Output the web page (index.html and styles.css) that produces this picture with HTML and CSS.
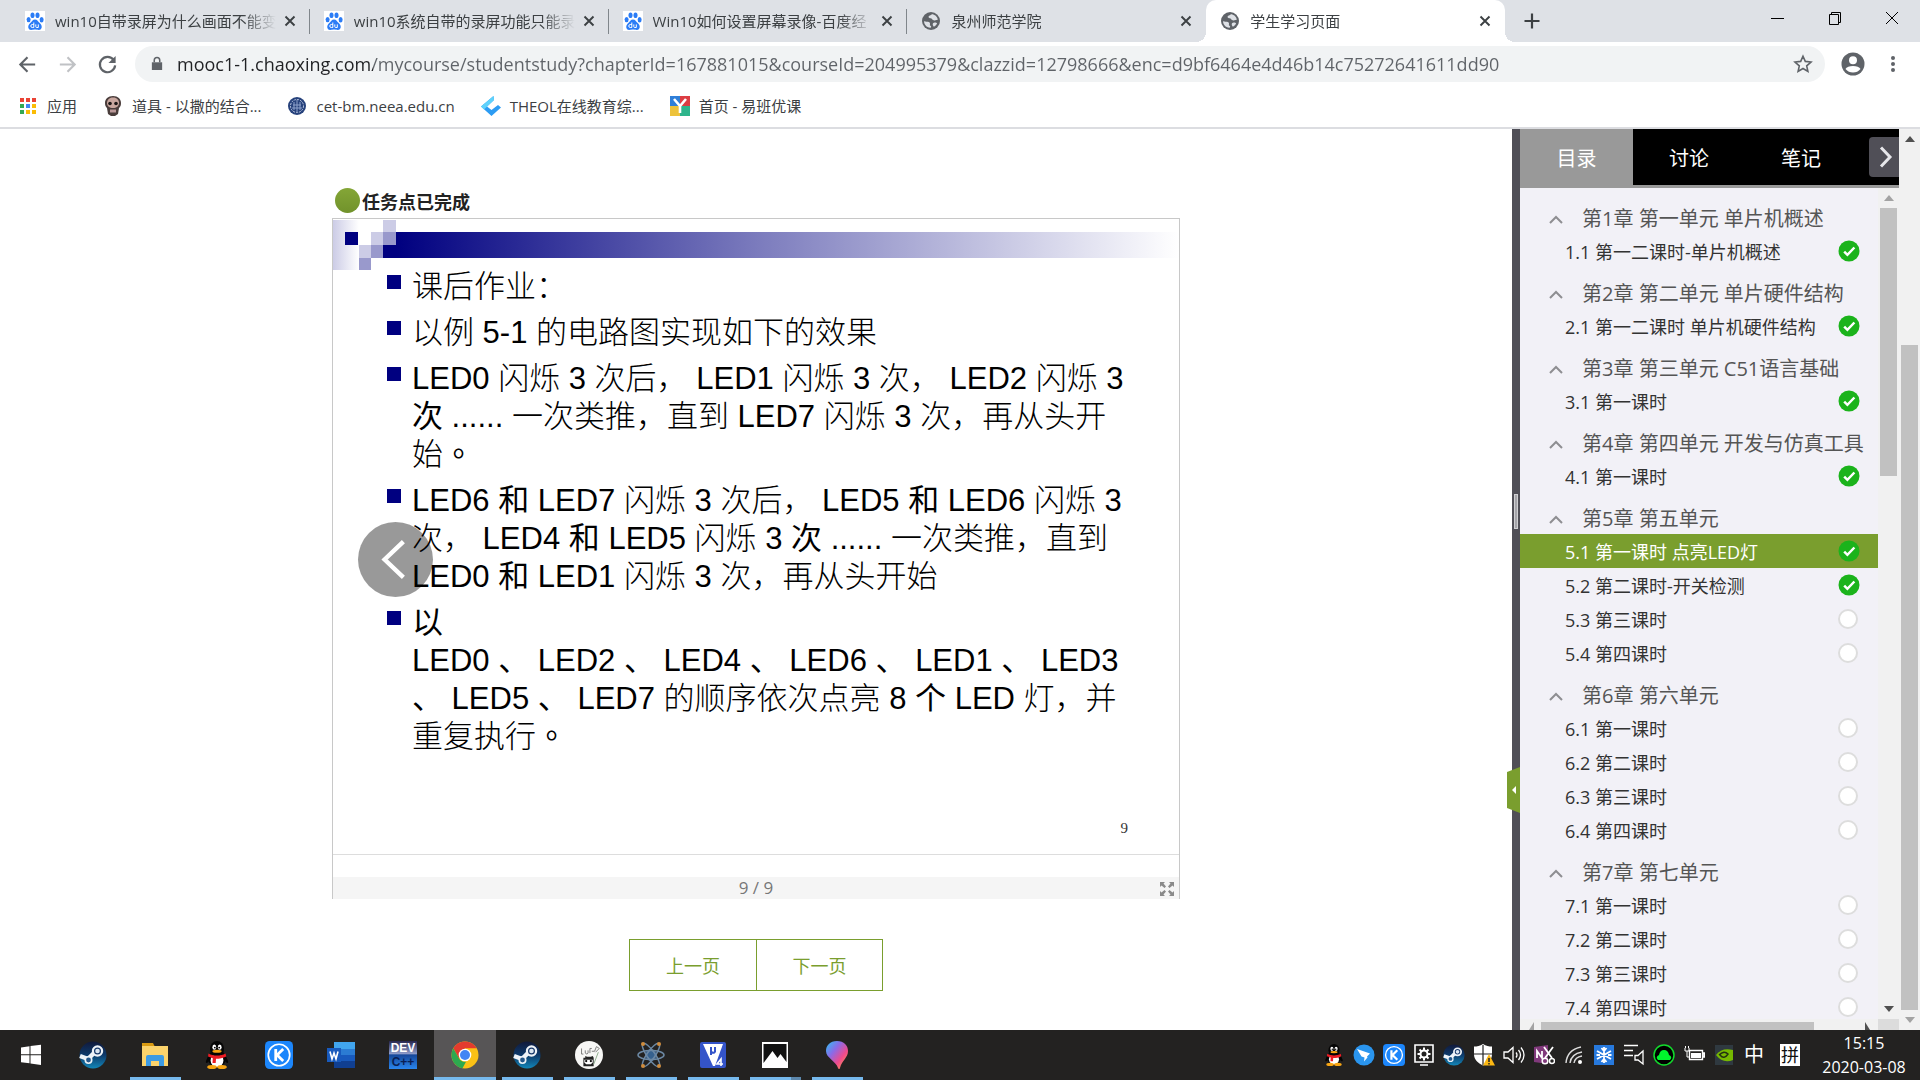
FILE: index.html
```html
<!DOCTYPE html>
<html lang="zh-CN">
<head>
<meta charset="utf-8">
<title>学生学习页面</title>
<link rel="stylesheet" href="styles.css">
</head>
<body>
<svg class="defs" aria-hidden="true">
  <defs>
    <linearGradient id="steamFill" x1="0" y1="0" x2="0" y2="1"><stop offset="0" stop-color="#11193a"/><stop offset=".5" stop-color="#0d3a6b"/><stop offset="1" stop-color="#1387b8"/></linearGradient>
    <linearGradient id="dropFill" x1="0" y1="0" x2="1" y2="1"><stop offset="0" stop-color="#29c5f5"/><stop offset=".35" stop-color="#8a6be8"/><stop offset=".65" stop-color="#ef4a8c"/><stop offset="1" stop-color="#ffb03a"/></linearGradient>
    <symbol id="paw" viewBox="0 0 20 20"><path fill="#fff" d="M0 0h20v20H0z"/><g fill="#2b7cf6"><ellipse cx="3.6" cy="8.6" rx="2" ry="2.7"/><ellipse cx="7.5" cy="4.2" rx="2" ry="2.8"/><ellipse cx="12.5" cy="4.2" rx="2" ry="2.8"/><ellipse cx="16.6" cy="8.8" rx="2" ry="2.7"/><path d="M10 8.4c2.4 0 3 2.2 5 3.9 2.600 2.200 2.400 6.600-1.200 6.700-1.500 0-2.300-.4-3.800-.4s-2.300.4-3.800.4c-3.600-.1-3.800-4.500-1.200-6.700 2-1.700 2.600-3.900 5-3.900z"/></g><path d="M8.800 11.500v5H7.300a1.500 1.500 0 0 1 0-3h1.500M10.800 13.400v2.300q0 .8.900.8h1.600v-3.100" fill="none" stroke="#fff"/></symbol>
    <symbol id="globe" viewBox="0 0 20 20"><circle cx="10" cy="10" r="9" fill="#5f6368"/><path fill="#dee1e6" d="M3 10c2 1.300 4.800.1 5.800 1.700.8 1.300-.8 2.300.9 3.300 1 .6.300 1.800-.4 1.700C5.500 16.500 3 13.500 3 10zM10.700 3.300c-.5 1.500-3.200.9-3.100 2.800.1 1.700 2.500.8 3.300 1.900.7 1 2.300 1.900 3.500 1.200l2.400-.5c-.4-2.900-3-5.400-6.100-5.400zM12 12.200c1-1.200 3.400-.6 4.100-.1-.4 1.600-1.700 3-3.200 3.700-.7-.8-1.700-2.400-.9-3.600z"/></symbol>
    <symbol id="x" viewBox="0 0 20 20"><path d="M5.500 5.500l9 9M14.500 5.500l-9 9" stroke="#3c4043" stroke-width="1.900"/></symbol>
    <symbol id="up" viewBox="0 0 14 10"><path d="M1 8l6-6 6 6" fill="none" stroke="#8e8e92" stroke-width="2"/></symbol>
    <symbol id="ok" viewBox="0 0 22 22"><circle cx="11" cy="11" r="10.500" fill="#1bb31b"/><path d="M6.200 11.600l3.200 3.200 7-7.300" fill="none" stroke="#fff" stroke-width="2.500"/></symbol>
    <symbol id="steam" viewBox="0 0 28 28"><circle cx="14" cy="14" r="13.500" fill="url(#steamFill)"/><path d="M1 15l8 3 6-6" stroke="#eef3f8" stroke-width="4.500" fill="none"/><circle cx="9.500" cy="19" r="4" fill="#eef3f8"/><circle cx="9.500" cy="19" r="2.400" fill="#24588b"/><circle cx="18.500" cy="10" r="4.600" fill="#17386a" stroke="#eef3f8" stroke-width="2.200"/><circle cx="18.500" cy="10" r="2.300" fill="#dce7f2"/></symbol>
    <symbol id="qq" viewBox="0 0 28 28"><ellipse cx="14" cy="17.500" rx="9" ry="8.500" fill="#050505"/><path d="M5.500 14l-2.500 6c-.5 2 .5 2.600 2 1.300l3-4zM22.500 14l2.500 6c.5 2-.5 2.600-2 1.300l-3-4z" fill="#050505"/><ellipse cx="14" cy="19.500" rx="6.400" ry="6.600" fill="#fff"/><ellipse cx="14" cy="8" rx="7" ry="8" fill="#050505"/><ellipse cx="11.300" cy="6.200" rx="1.900" ry="2.600" fill="#fff"/><ellipse cx="16.700" cy="6.200" rx="1.900" ry="2.600" fill="#fff"/><circle cx="11.800" cy="6.600" r=".9"/><circle cx="16.200" cy="6.600" r=".9"/><ellipse cx="14" cy="10.300" rx="4.600" ry="1.500" fill="#f8a512"/><path d="M5.500 12.500c5 2.800 12 2.800 17 0l.8 3c-3.500 1.800-6.800 2.300-10.300 2.300l-.3 4.200H9.500l.3-4.800-4.800-1.700z" fill="#ed1c24"/><ellipse cx="9" cy="26" rx="4.800" ry="2" fill="#f8a512"/><ellipse cx="19" cy="26" rx="4.800" ry="2" fill="#f8a512"/></symbol>
    <symbol id="kapp" viewBox="0 0 30 30"><rect width="30" height="30" rx="5" fill="#1c86fb"/><circle cx="15" cy="15" r="11.500" fill="none" stroke="#fff" stroke-width="1.800"/><path d="M11.500 8.500v13M19.500 8.500L13 15l6.500 6.500" fill="none" stroke="#fff" stroke-width="3"/></symbol>
  </defs>
</svg>

<header class="browser">
  <div class="tabstrip">
    <nav class="tabs" aria-label="标签页">
      <div class="tab"><svg class="favicon"><use href="#paw"/></svg><button class="tab-title">win10自带录屏为什么画面不能变</button><button class="tab-close" aria-label="关闭"><svg><use href="#x"/></svg></button></div>
      <div class="tab"><svg class="favicon"><use href="#paw"/></svg><button class="tab-title">win10系统自带的录屏功能只能录</button><button class="tab-close" aria-label="关闭"><svg><use href="#x"/></svg></button></div>
      <div class="tab"><svg class="favicon"><use href="#paw"/></svg><button class="tab-title">Win10如何设置屏幕录像-百度经</button><button class="tab-close" aria-label="关闭"><svg><use href="#x"/></svg></button></div>
      <div class="tab last"><svg class="favicon"><use href="#globe"/></svg><button class="tab-title">泉州师范学院</button><button class="tab-close" aria-label="关闭"><svg><use href="#x"/></svg></button></div>
      <div class="tab active"><svg class="favicon"><use href="#globe"/></svg><button class="tab-title">学生学习页面</button><button class="tab-close" aria-label="关闭"><svg><use href="#x"/></svg></button></div>
    </nav>
    <button class="new-tab" aria-label="新标签页"><svg viewBox="0 0 20 20"><path d="M10 2.500v15M2.500 10h15" stroke="#3c4043" stroke-width="2.200"/></svg></button>
    <div class="window-controls">
      <button aria-label="最小化"><svg viewBox="0 0 16 16"><path d="M1 8.500h13" stroke="#000"/></svg></button>
      <button aria-label="还原"><svg viewBox="0 0 16 16"><path d="M2.500 4.500h9v10h-9zM4.500 4.500v-2h9v10h-2" fill="none" stroke="#000"/></svg></button>
      <button aria-label="关闭窗口"><svg viewBox="0 0 16 16"><path d="M2 2l12 12M14 2L2 14" stroke="#000"/></svg></button>
    </div>
  </div>
  <div class="toolbar">
    <button class="nav-btn" aria-label="后退"><svg viewBox="0 0 24 24"><path d="M20 12H5M12 4.500L4.500 12l7.500 7.500" fill="none" stroke="#5f6368" stroke-width="2.200"/></svg></button>
    <button class="nav-btn" aria-label="前进"><svg viewBox="0 0 24 24"><path d="M4 12h15M12 4.500l7.500 7.500-7.500 7.500" fill="none" stroke="#c0c2c5" stroke-width="2.200"/></svg></button>
    <button class="nav-btn" aria-label="刷新"><svg viewBox="0 0 24 24"><path d="M18.500 7.300A8 8 0 1 0 20 13" fill="none" stroke="#5f6368" stroke-width="2.300"/><path d="M20.500 3v7.500H13z" fill="#5f6368"/></svg></button>
    <div class="omnibox">
      <svg class="lock" viewBox="0 0 14 18"><path d="M1 7h12v9H1z" fill="#5f6368"/><path d="M3.800 7V4.500a3.200 3.200 0 0 1 6.400 0V7" fill="none" stroke="#5f6368" stroke-width="1.800"/></svg>
      <input class="url" type="text" aria-label="地址" value="mooc1-1.chaoxing.com/mycourse/studentstudy?chapterId=167881015&amp;courseId=204995379&amp;clazzid=12798666&amp;enc=d9bf6464e4d46b14c75272641611dd90">
      <button class="star" aria-label="添加书签"><svg viewBox="0 0 20 20"><path d="M10 2.200l2.300 5.200 5.700.6-4.300 3.800 1.200 5.600-4.900-2.900-4.900 2.900 1.200-5.600L2 8l5.700-.6z" fill="none" stroke="#5f6368" stroke-width="1.600"/></svg></button>
    </div>
    <button class="profile" aria-label="账户"><svg viewBox="0 0 24 24"><circle cx="12" cy="12" r="11.500" fill="#5f6368"/><circle cx="12" cy="8.300" r="4" fill="#fff"/><path d="M4.500 17c1.600-4 13.400-4 15 0-3.700 4.700-11.300 4.700-15 0z" fill="#fff"/></svg></button>
    <button class="menu" aria-label="菜单"><svg viewBox="0 0 6 18"><g fill="#5f6368"><circle cx="3" cy="3" r="2"/><circle cx="3" cy="9" r="2"/><circle cx="3" cy="15" r="2"/></g></svg></button>
  </div>
  <nav class="bookmarks" aria-label="书签">
    <a href="#"><svg viewBox="0 0 20 20"><path fill="#ea4335" d="M2 2h4v4H2zM8 2h4v4H8zM14 2h4v4h-4z"/><path fill="#34a853" d="M2 8h4v4H2z"/><path fill="#4285f4" d="M8 8h4v4H8z"/><path fill="#fbbc05" d="M14 8h4v4h-4zM8 14h4v4H8zM14 14h4v4h-4z"/><path fill="#34a853" d="M2 14h4v4H2z"/></svg><span>应用</span></a>
    <a href="#"><svg viewBox="0 0 20 20"><path d="M10 0c5 0 8 3 8 7 0 3-1 4-2 5l-1 6-3 2H8l-3-2-1-6C3 11 2 10 2 7c0-4 3-7 8-7z" fill="#4a3d3b"/><path d="M10 1.500c4 0 6 2.500 6 5.500s-2.500 5-6 5-6-2-6-5 2-5.500 6-5.500z" fill="#c9a79f"/><circle cx="7" cy="7.500" r="1.800" fill="#1d1716"/><circle cx="13" cy="7.500" r="1.800" fill="#1d1716"/><path d="M7 15h6" stroke="#b99" stroke-width="3"/></svg><span>道具 - 以撒的结合...</span></a>
    <a href="#"><svg viewBox="0 0 20 20"><circle cx="10" cy="10" r="9" fill="#27427c"/><circle cx="10" cy="10" r="6.500" fill="none" stroke="#b8c4df" stroke-dasharray="2 1"/><path d="M5 12h10M6 9h8M10 4v12M7 6v8M13 6v8" stroke="#8fa2cc"/></svg><span>cet-bm.neea.edu.cn</span></a>
    <a href="#"><svg viewBox="0 0 20 20"><path d="M12.500 0L0 10.500 10.500 20 20 11.500l-3-2.500-6.500 5L6 10.500 13 4z" fill="#2c9cf3"/><path d="M12.500 0L0 10.500l3 3L13 4z" fill="#5fd2fb"/></svg><span>THEOL在线教育综...</span></a>
    <a href="#"><svg viewBox="0 0 20 20"><path fill="#2f7fd8" d="M0 0h10v10H0z"/><path fill="#dc3d43" d="M10 0h10v10H10z"/><path fill="#edc23a" d="M0 10h10v10H0z"/><path fill="#2eb58c" d="M10 10h10v10H10z"/><path d="M4 3l6 7 6-7M10 9v8" fill="none" stroke="#fff" stroke-width="2.600"/></svg><span>首页 - 易班优课</span></a>
  </nav>
</header>

<div class="page">
  <main class="content">
    <p class="task-done"><span class="dot"></span>任务点已完成</p>
    <section class="viewer">
      <div class="slide">
        <div class="banner">
          <svg class="mosaic" viewBox="0 0 64 51"><defs><linearGradient id="fade"><stop offset="0" stop-color="#cccce6"/><stop offset="1" stop-color="#fff"/></linearGradient></defs><path d="M0 0h26v50H0z" fill="url(#fade)"/><path d="M12 12h13v13H12z" fill="#000080"/><path d="M50 12h14v26H50z" fill="#000080"/><path d="M50 0h13v12H50zM38 12h12v13H38zM26 25h12v13H26z" fill="#cccce6"/><path d="M50 12h13v13H50zM38 25h12v13H38zM26 38h12v12H26z" fill="#99c"/></svg>
          <div class="bar"></div>
        </div>
        <ul class="points">
          <li>课后作业：</li>
          <li>以例 5-1 的电路图实现如下的效果</li>
          <li>LED0 闪烁 3 次后， LED1 闪烁 3 次， LED2 闪烁 3<br><b>次</b> ...... 一次类推，直到 LED7 闪烁 3 次，再从头开<br>始<b class="stop" lang="zh-TW">。</b></li>
          <li>LED6 <b>和</b> LED7 闪烁 3 次后， LED5 <b>和</b> LED6 闪烁 3<br>次， LED4 <b>和</b> LED5 闪烁 3 <b>次</b> ...... 一次类推，直到<br>LED0 <b>和</b> LED1 闪烁 3 次，再从头开始</li>
          <li><b>以</b><br>LED0 <b>、</b> LED2 <b>、</b> LED4 <b>、</b> LED6 <b>、</b> LED1 <b>、</b> LED3<br><b>、</b> LED5 <b>、</b> LED7 的顺序依次点亮 8 <b>个</b> LED 灯，并<br>重复执行<b class="stop" lang="zh-TW">。</b></li>
        </ul>
        <span class="slide-no">9</span>
        <button class="prev-slide" aria-label="上一张"><svg viewBox="0 0 76 76"><path d="M46 20L27 38l19 18" fill="none" stroke="#fff" stroke-width="4.500"/></svg></button>
      </div>
      <footer class="pager">
        <span>9 / 9</span>
        <button class="fullscreen" aria-label="全屏"><svg viewBox="0 0 14 14"><path fill="#8a8a8a" d="M0 0h5L3.500 1.500 6 4.500 4.500 6l-3-2.500L0 5zM14 0v5l-1.500-1.500-3 2.500L8 4.500l2.500-3L9 0zM0 14V9l1.500 1.500 3-2.500L6 9.500l-2.500 3L5 14zM14 14H9l1.500-1.500L8 9.500 9.500 8l3 2.500L14 9z"/></svg></button>
      </footer>
    </section>
    <div class="page-turn"><button>上一页</button><button>下一页</button></div>
  </main>

  <div class="splitter">
    <span class="grip"></span>
    <button class="collapse" aria-label="收起目录"><svg viewBox="0 0 13 46"><path d="M0 5L13 0v46L0 41z" fill="#7a9e2e"/><path d="M9 19v8l-4-4z" fill="#fff"/></svg></button>
  </div>

  <aside class="sidebar">
    <div class="side-tabs">
      <button class="on">目录</button><button>讨论</button><button>笔记</button>
      <button class="more" aria-label="展开"><svg viewBox="0 0 14 22"><path d="M2 1.500l9 9.500-9 9.500" fill="none" stroke="#e6e6ea" stroke-width="3"/></svg></button>
    </div>
    <div class="side-body">
      <nav class="chapters" aria-label="目录">
        <h3><svg><use href="#up"/></svg>第1章 第一单元 单片机概述</h3>
        <a href="#">1.1 第一二课时-单片机概述<svg class="done"><use href="#ok"/></svg></a>
        <h3><svg><use href="#up"/></svg>第2章 第二单元 单片硬件结构</h3>
        <a href="#">2.1 第一二课时 单片机硬件结构<svg class="done"><use href="#ok"/></svg></a>
        <h3><svg><use href="#up"/></svg>第3章 第三单元 C51语言基础</h3>
        <a href="#">3.1 第一课时<svg class="done"><use href="#ok"/></svg></a>
        <h3><svg><use href="#up"/></svg>第4章 第四单元 开发与仿真工具</h3>
        <a href="#">4.1 第一课时<svg class="done"><use href="#ok"/></svg></a>
        <h3><svg><use href="#up"/></svg>第5章 第五单元</h3>
        <a href="#" class="current">5.1 第一课时 点亮LED灯<svg class="done"><use href="#ok"/></svg></a>
        <a href="#">5.2 第二课时-开关检测<svg class="done"><use href="#ok"/></svg></a>
        <a href="#">5.3 第三课时<i class="todo"></i></a>
        <a href="#">5.4 第四课时<i class="todo"></i></a>
        <h3><svg><use href="#up"/></svg>第6章 第六单元</h3>
        <a href="#">6.1 第一课时<i class="todo"></i></a>
        <a href="#">6.2 第二课时<i class="todo"></i></a>
        <a href="#">6.3 第三课时<i class="todo"></i></a>
        <a href="#">6.4 第四课时<i class="todo"></i></a>
        <h3><svg><use href="#up"/></svg>第7章 第七单元</h3>
        <a href="#">7.1 第一课时<i class="todo"></i></a>
        <a href="#">7.2 第二课时<i class="todo"></i></a>
        <a href="#">7.3 第三课时<i class="todo"></i></a>
        <a href="#">7.4 第四课时<i class="todo"></i></a>
      </nav>
      <div class="scroll vertical inner"><i class="arrow"><svg viewBox="0 0 10 6"><path d="M0 6l5-6 5 6z" fill="#a3a3a3"/></svg></i><i class="thumb"></i><i class="after"></i><i class="arrow"><svg viewBox="0 0 10 6"><path d="M0 0l5 6 5-6z" fill="#505050"/></svg></i></div>
      <div class="scroll horizontal"><i class="arrow"><svg viewBox="0 0 10 10"><path d="M8 2v8H3z" fill="#a3a3a3"/></svg></i><i class="thumb"></i><i class="after"></i><i class="arrow"><svg viewBox="0 0 10 10"><path d="M2 2v8h5z" fill="#505050"/></svg></i></div>
      <div class="corner"></div>
    </div>
  </aside>
  <div class="scroll vertical outer"><i class="arrow"><svg viewBox="0 0 10 6"><path d="M0 6l5-6 5 6z" fill="#505050"/></svg></i><i class="before"></i><i class="thumb"></i><i class="arrow"><svg viewBox="0 0 10 6"><path d="M0 0l5 6 5-6z" fill="#a3a3a3"/></svg></i></div>
</div>

<footer class="taskbar">
  <div class="apps">
    <button aria-label="开始"><svg viewBox="0 0 28 28"><path fill="#fff" d="M4 6.500l8.500-1.200v8H4zM13.500 5.100L24 3.700v9.600H13.500zM4 14.300h8.500v8L4 21.200zM13.500 14.300H24V24l-10.500-1.500z"/></svg></button>
    <button aria-label="Steam"><svg><use href="#steam"/></svg></button>
    <button class="run" aria-label="文件资源管理器"><svg viewBox="0 0 28 28"><path d="M1 2h11l2 4H1z" fill="#d99b12"/><path d="M1 5h26v20H1z" fill="#fbd36b"/><path d="M5 25v-9q0-2 2-2h14q2 0 2 2v9h-5v-5h-8v5z" fill="#3d9be3"/></svg></button>
    <button aria-label="QQ"><svg><use href="#qq"/></svg></button>
    <button aria-label="酷狗"><svg><use href="#kapp"/></svg></button>
    <button aria-label="Word"><svg viewBox="0 0 28 28"><path d="M7 1h21v7H7z" fill="#41a5ee"/><path d="M7 8h21v6H7z" fill="#2b7cd3"/><path d="M7 14h21v6H7z" fill="#185abd"/><path d="M7 20h21v7H7z" fill="#103f91"/><path d="M0 7h14v14H0z" fill="#185abd"/><path d="M3 10.500l2 7.500 2-6 2 6 2-7.500" fill="none" stroke="#fff" stroke-width="1.600"/></svg></button>
    <button aria-label="Dev-C++"><span class="dev">DEV<em>C++</em></span></button>
    <button class="run focus" aria-label="Chrome"><svg viewBox="0 0 28 28"><circle cx="14" cy="14" r="13.500" fill="#fbc116"/><path d="M2.300 7.300A13.500 13.500 0 0 1 25.700 7.300H14l-5.900 10.100z" fill="#e33b2e"/><path d="M2.300 7.300L8.100 17.400c1.400 2.300 4 3.700 6.900 3.300l-3.500 6.600A13.500 13.500 0 0 1 2.300 7.300z" fill="#2da94f"/><circle cx="14" cy="14" r="6.300" fill="#fff"/><circle cx="14" cy="14" r="5" fill="#4285f4"/></svg></button>
    <button class="run" aria-label="Steam"><svg><use href="#steam"/></svg></button>
    <button class="run" aria-label="头像"><svg viewBox="0 0 30 30"><circle cx="15" cy="15" r="15" fill="#f7f7f5"/><path d="M7 8v6h2M11 10v3q2 2 3 0v-3M16 13V8h2M18 11h3l2-5 3 2-4 4" fill="none" stroke="#777"/><path d="M9 18h2v-2l2 1h4l2-1 1 2v9H9z" fill="#222"/><path d="M10 20h9v3l-2 2h-5l-2-2z" fill="#fff"/><circle cx="12" cy="21.500" r="1.200"/><circle cx="17" cy="21.500" r="1.200"/><path d="M25 12l-5 13" stroke="#8aab8a"/></svg></button>
    <button class="run" aria-label="原子"><svg viewBox="0 0 28 28"><circle cx="14" cy="14" r="6" fill="#36618e"/><g fill="none" stroke="#6c88a3" stroke-width="1.500"><ellipse cx="14" cy="14" rx="13" ry="4.500"/><ellipse cx="14" cy="14" rx="14" ry="4" transform="rotate(55 14 14)"/><ellipse cx="14" cy="14" rx="14" ry="4" transform="rotate(125 14 14)"/></g><g fill="#d08c3c"><circle cx="6" cy="3" r="2"/><circle cx="22" cy="3" r="2"/><circle cx="6" cy="25" r="2"/><circle cx="22" cy="25" r="2"/></g></svg></button>
    <button class="run" aria-label="Keil"><svg viewBox="0 0 28 28"><rect x="1" y="1" width="26" height="26" rx="2" fill="#3454c9"/><path d="M4 3h20l-8 22h-2z" fill="#fff"/><path d="M12 6v8M12 11q4 2 4-1V6v5" fill="none" stroke="#3454c9" stroke-width="2"/><path d="M22 25v-7l-4 5h6" fill="none" stroke="#fff" stroke-width="1.600"/></svg></button>
    <button class="run stacked" aria-label="照片"><svg viewBox="0 0 28 28"><path d="M1 1h26v26H1z" fill="#fff"/><path d="M2.500 3h23v18l-6-8-3 4-5-7-9 12z" fill="#111"/></svg></button>
    <button class="run" aria-label="画图 3D"><svg viewBox="0 0 28 28"><path d="M14 0c7 0 11 4.500 11 10 0 7-6 9-8 17-.3 1.500-1.500 1.500-2 0C13 20 3 17 3 10 3 4.500 7 0 14 0z" fill="url(#dropFill)"/></svg></button>
  </div>
  <div class="tray">
    <svg><use href="#qq"/></svg>
    <svg viewBox="0 0 22 22"><circle cx="11" cy="11" r="10.500" fill="#2a95ee"/><path d="M4 5l13 4.500-3 3 .5 1-3.500 4 .5-4-3-1z" fill="#fff"/></svg>
    <svg><use href="#kapp"/></svg>
    <svg viewBox="0 0 22 22"><path d="M2 1h18v17H2zM7 21h8" fill="none" stroke="#fff" stroke-width="1.600"/><circle cx="11" cy="10" r="3.500" fill="none" stroke="#fff" stroke-width="2"/><path d="M11 3.500v3M11 13.500v3M4.500 10h3M14.500 10h3M6.500 5.500l2 2M15.500 5.500l-2 2M6.500 14.500l2-2M15.500 14.500l-2-2" stroke="#fff" stroke-width="2"/></svg>
    <svg><use href="#steam"/></svg>
    <svg viewBox="0 0 22 22"><path d="M10 0c3 2 6 2.500 9 2.500v8c0 5-4 8.500-9 11-5-2.500-9-6-9-11v-8C4 2.500 7 2 10 0z" fill="#fff"/><path d="M10 1v20M1 10h18" stroke="#222" stroke-width="1.200"/><path d="M16 10l6 11.500H10z" fill="#fcb813"/><path d="M16 14v4M16 19v1.500" stroke="#222" stroke-width="1.500"/></svg>
    <svg viewBox="0 0 22 22"><path d="M1 8h4l5-4.500v15L5 14H1zM13 8.500q2 2.500 0 5M15.500 6q4 5 0 10M18 3.500q6 7.500 0 15" fill="none" stroke="#fff" stroke-width="1.300"/></svg>
    <svg viewBox="0 0 22 22"><path d="M1 3l14-2v19L1 18z" fill="#80397b"/><path d="M4 14V7l5 7V7M11 3l8 11M20 3l-8 11" fill="none" stroke="#fff" stroke-width="1.800"/><circle cx="12" cy="17" r="2.800" fill="none" stroke="#fff" stroke-width="1.500"/><circle cx="19" cy="17" r="2.500" fill="none" stroke="#fff" stroke-width="1.500"/></svg>
    <svg viewBox="0 0 22 22"><path d="M3 19Q4 6 18 3M7 19q1-9 12-11M11 19q1-6 8-7" fill="none" stroke="#ddd" stroke-width="1.400"/><circle cx="17" cy="18" r="2" fill="#fff"/></svg>
    <svg viewBox="0 0 22 22"><path d="M1 1h20v20H1z" fill="#2779dd"/><path d="M11 3v16M4 7l14 8M18 7L4 15M8.500 4l2.500 3 2.500-3M8.500 18l2.500-3 2.500 3M3.500 11H7M15 11h3.500" stroke="#fff" stroke-width="1.800" fill="none"/></svg>
    <svg viewBox="0 0 22 22"><path d="M1 1.500h14M1 6.500h9M1 11.500h9M12 11.500h3l5-4.500v13L15 16h-3z" fill="none" stroke="#fff" stroke-width="1.300"/></svg>
    <svg viewBox="0 0 22 22"><circle cx="11" cy="11" r="10" fill="#000" stroke="#12db2c" stroke-width="1.500"/><path d="M5 16q-3-3 1-5 1-5 5-5t5 5q4 2 1 5z" fill="#00f52d"/></svg>
    <svg viewBox="0 0 22 22"><path d="M6.500 6.500h13v9h-13zM20 9h1.500v4H20z" fill="none" stroke="#fff" stroke-width="1.400"/><path d="M8 9h10v5H8z" fill="#fff"/><path d="M2 4v3h4V4M4 7v6h2M2.500 2v2M5.500 2v2" fill="none" stroke="#fff"/></svg>
    <svg viewBox="0 0 22 22"><path d="M2 1h18v20H2z" fill="#2f3940"/><path d="M3 11q6-8 17-5v10q-10 4-17-5z" fill="#76b900"/><path d="M6 11q5-5 9-1-4 6-8 1" fill="none" stroke="#233010" stroke-width="1.500"/></svg>
    <span class="lang">中</span>
    <span class="ime">拼</span>
    <time class="clock">15:15<br>2020-03-08</time>
  </div>
</footer>
</body>
</html>
```
FILE: styles.css
```css
* { box-sizing: border-box; }
body {
  margin: 0;
  height: 100vh;
  overflow: hidden;
  display: flex;
  flex-direction: column;
  background: #fff;
  font-family: "Open Sans", "Noto Sans CJK SC", sans-serif;
  font-size: 15px;
  color: #3c4043;
}
button { border: 0; padding: 0; margin: 0; background: none; font: inherit; color: inherit; }
a { color: inherit; text-decoration: none; }
svg { display: block; flex: none; }
.defs { position: absolute; width: 0; height: 0; }

/* browser frame */
.browser { flex: none; border-bottom: 2px solid #dcdde1; }
.tabstrip { display: flex; align-items: stretch; height: 42px; background: #dee1e6; padding-left: 11px; }
.tabs { display: flex; flex: 0 1 1494px; min-width: 0; }
.tab { position: relative; display: flex; align-items: center; flex: 1; min-width: 0; padding: 0 10px 0 14px; }
.tab:not(.active):not(.last)::after { content: ""; position: absolute; right: 0; top: 9px; height: 25px; border-right: 1px solid #80868b; }
.tab.active { background: #fff; border-radius: 10px 10px 0 0; }
.tab.active::before, .tab.active::after { content: ""; position: absolute; bottom: 0; width: 10px; height: 10px; }
.tab.active::before { left: -10px; background: radial-gradient(circle at 0 0, transparent 10px, #fff 10px); }
.tab.active::after { right: -10px; background: radial-gradient(circle at 100% 0, transparent 10px, #fff 10px); }
.favicon { width: 20px; height: 20px; }
.tab-title { flex: 1; min-width: 0; margin: 0 4px 0 10px; overflow: hidden; white-space: nowrap; text-align: left; line-height: 24px; -webkit-mask-image: linear-gradient(90deg, #000 85%, transparent); mask-image: linear-gradient(90deg, #000 85%, transparent); }
.tab-close svg { width: 20px; height: 20px; }
.new-tab { margin-left: 17px; }
.new-tab svg { width: 20px; height: 20px; }
.window-controls { display: flex; margin-left: auto; }
.window-controls button { display: grid; justify-items: center; padding-top: 10px; width: 57px; }
.window-controls svg { width: 16px; height: 16px; }

.toolbar { display: flex; align-items: center; height: 44px; padding: 0 14px; }
.nav-btn { width: 40px; display: grid; place-items: center; }
.nav-btn:first-child { margin-left: -7px; }
.nav-btn svg { width: 23px; height: 23px; }
.omnibox { display: flex; align-items: center; flex: 1; height: 36px; margin-left: 8px; padding: 0 12px 0 16px; border-radius: 18px; background: #f1f3f4; }
.lock { width: 12px; height: 16px; margin-right: 14px; }
.url { flex: 1; min-width: 0; border: 0; padding: 0; outline: 0; font: 18px/28px "Open Sans", "Noto Sans CJK SC", sans-serif; color: transparent; background: linear-gradient(90deg, #202124 196px, #5f6368 196px); -webkit-background-clip: text; background-clip: text; }
.star svg { width: 20px; height: 20px; }
.profile { margin: 0 25px 0 16px; }
.profile svg { width: 24px; height: 24px; }
.menu { margin-right: 10px; }
.menu svg { width: 6px; height: 18px; }
.bookmarks { display: flex; align-items: center; gap: 26px; height: 41px; padding: 0 18px 2px; }
.bookmarks a { display: flex; align-items: center; gap: 9px; line-height: 24px; }
.bookmarks svg { width: 20px; height: 20px; }

/* course page */
.page { flex: 1; display: flex; min-height: 0; }
.content { flex: 1; min-width: 0; display: flex; flex-direction: column; align-items: center; padding-top: 58px; }
.task-done { width: 100%; max-width: 848px; margin: 0; display: flex; align-items: center; gap: 2px; height: 31px; padding: 0 0 4px 3px; font-size: 18px; font-weight: 700; color: #222; }
.dot { width: 25px; height: 25px; border-radius: 50%; background: linear-gradient(#84a637, #71922b); }
.viewer { width: 100%; max-width: 848px; border: 1px solid #c8c8c8; border-bottom: 0; }
.slide { position: relative; padding-bottom: 16px; border-bottom: 1px solid #ddd; }
.banner { display: flex; align-items: flex-start; padding-top: 1px; }
.mosaic { width: 64px; height: 51px; }
.bar { flex: 1; height: 26px; margin-top: 12px; background: linear-gradient(90deg, #000080, #7b7bbd 46%, #fff); }
.points { list-style: none; margin: -3px 0 0; padding: 0 0 0 79px; display: flex; flex-direction: column; gap: 8px; font: 300 31px/38px "Liberation Sans", "Noto Sans CJK SC", sans-serif; color: #000; white-space: nowrap; }
.points li { position: relative; }
.points li::before { content: ""; position: absolute; left: -25px; top: 7px; width: 14px; height: 14px; background: #000080; }
.points b { font-weight: 400; }
.points .stop { font-family: "Noto Sans CJK TC", sans-serif; line-height: 1; }
.slide-no { display: block; text-align: right; margin: 62px 51px 0 0; font: 15px/20px "Liberation Serif", serif; color: #333; }
.prev-slide { position: absolute; left: 25px; top: 303px; width: 75px; height: 75px; border-radius: 50%; background: rgba(0, 0, 0, .4); }
.pager { position: relative; display: flex; justify-content: center; margin-top: 22px; height: 22px; background: #f5f5f5; font-size: 17px; line-height: 22px; color: #777; }
.fullscreen { position: absolute; right: 5px; top: 5px; }
.fullscreen svg { width: 14px; height: 14px; }
.page-turn { display: flex; margin-top: 40px; border: 1px solid #7a9e2e; }
.page-turn button { width: 126px; height: 50px; font-size: 18px; color: #7a9e2e; }
.page-turn button + button { border-left: 1px solid #7a9e2e; }

.splitter { position: relative; width: 8px; background: #504f57; }
.grip { position: absolute; left: 2px; top: 365px; width: 4px; height: 35px; background: #a5a5aa; border: 1px solid #cfcfd2; }
.collapse { position: absolute; right: 0; top: 638px; }
.collapse svg { width: 13px; height: 46px; }

.sidebar { width: 379px; display: flex; flex-direction: column; min-height: 0; background: #f2f1f7; }
.side-tabs { flex: none; display: flex; height: 59px; background: #000; border-bottom: 3px solid #999; color: #fff; font-size: 20px; }
.side-tabs button { width: 112px; }
.side-tabs .on { width: 113px; background: #999; }
.side-tabs .more { width: 30px; height: 40px; margin: 8px 0 0 auto; padding-left: 4px; display: grid; place-items: center; background: #504f57; border-radius: 4px 0 0 4px; }
.more svg { width: 14px; height: 22px; }
.side-body { flex: 1; min-height: 0; display: grid; grid-template-columns: minmax(0, 1fr) 21px; grid-template-rows: minmax(0, 1fr) 11px; }
.chapters { padding-top: 5px; overflow: hidden; white-space: nowrap; }
.chapters h3 { display: flex; align-items: center; gap: 19px; height: 41px; margin: 0; padding: 7px 0 0 29px; font-size: 20px; font-weight: 400; color: #555; }
.chapters h3 svg { width: 14px; height: 10px; margin-top: 6px; }
.chapters a { display: flex; align-items: center; justify-content: space-between; height: 34px; padding: 0 18px 0 45px; font-size: 18px; color: #333; }
.chapters .current { background: #7a9e2e; color: #fff; }
.done { width: 22px; height: 22px; }
.todo { width: 20px; height: 20px; margin-right: 2px; border: 2px solid #ddd; border-radius: 50%; background: #fff; }

.scroll { display: flex; background: #f1f1f1; }
.scroll i { display: block; }
.scroll .arrow { display: grid; place-items: center; }
.scroll .thumb { background: #c1c1c1; }
.vertical { flex-direction: column; width: 21px; }
.vertical .arrow { height: 20px; }
.vertical .arrow svg { width: 10px; height: 6px; }
.vertical .thumb { margin: 0 2px; }
.inner .thumb { flex: 267; }
.inner .after { flex: 522; }
.outer .before { flex: 196; }
.outer .thumb { flex: 666; }
.horizontal .arrow { width: 21px; }
.horizontal .arrow svg { width: 10px; height: 10px; }
.horizontal .thumb { flex: 273; margin-top: 3px; }
.horizontal .after { flex: 43; }
.corner { background: #dcdcdc; }

/* system taskbar */
.taskbar { flex: none; display: flex; justify-content: space-between; height: 50px; background: #232221; color: #fff; }
.apps { display: flex; }
.apps button { position: relative; width: 62px; display: grid; place-items: center; }
.apps svg { width: 28px; height: 28px; }
.run::after { content: ""; position: absolute; left: 6px; right: 5px; bottom: 0; height: 3px; background: #76b9ed; }
.apps .focus { background: #575556; }
.focus::after { left: 0; right: 0; }
.stacked::after { background: linear-gradient(90deg, #76b9ed 41px, #5c87ab 41px); }
.dev { width: 28px; height: 28px; background: linear-gradient(#26264e, #8d9bc8 45%, #16489a 50%, #2a86ee); font: 700 12px/14px "Liberation Sans", sans-serif; text-align: center; }
.dev em { display: block; font-style: normal; color: #0a1f55; }
.tray { display: flex; align-items: center; gap: 8px; padding-right: 10px; }
.tray svg { width: 22px; height: 22px; }
.lang { width: 22px; font-size: 20px; text-align: center; line-height: 24px; }
.ime { width: 20px; margin: 0 10px 0 7px; background: #fff; color: #111; font-size: 18px; line-height: 22px; text-align: center; }
.clock { width: 92px; font-size: 16px; line-height: 24px; text-align: center; white-space: nowrap; }
```
